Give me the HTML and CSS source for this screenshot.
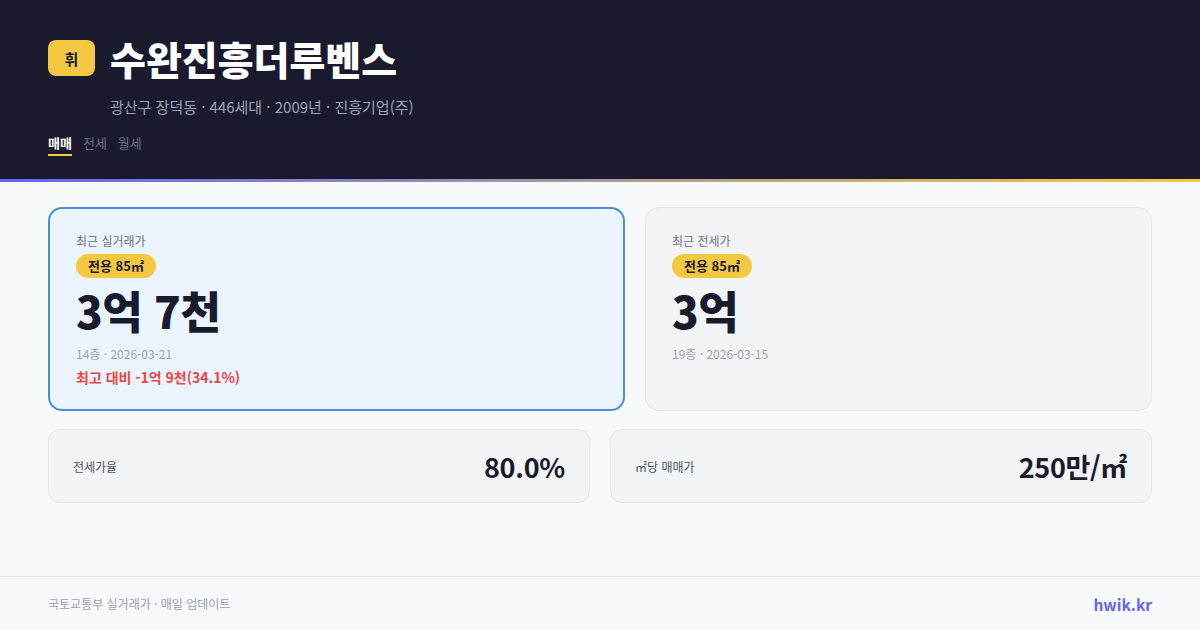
FILE: index.html
```html
<!DOCTYPE html>
<html lang="ko">
<head>
<meta charset="utf-8">
<link rel="stylesheet" href="styles.css">
</head>
<body>
<div class="page">
  <header class="header">
    <div class="title-row">
      <div class="logo">휘</div>
      <h1 class="title">수완진흥더루벤스</h1>
    </div>
    <div class="subtitle">광산구 장덕동 · 446세대 · 2009년 · 진흥기업(주)</div>
    <nav class="tabs">
      <span class="tab active">매매</span>
      <span class="tab">전세</span>
      <span class="tab">월세</span>
    </nav>
  </header>
  <div class="accent"></div>
  <main class="main">
    <div class="top-row">
      <section class="card card-primary">
        <div class="card-label">최근 실거래가</div>
        <div class="pill">전용 85㎡</div>
        <div class="price">3억 7천</div>
        <div class="meta">14층 · 2026-03-21</div>
        <div class="diff">최고 대비 -1억 9천(34.1%)</div>
      </section>
      <section class="card card-plain">
        <div class="card-label">최근 전세가</div>
        <div class="pill">전용 85㎡</div>
        <div class="price">3억</div>
        <div class="meta">19층 · 2026-03-15</div>
      </section>
    </div>
    <div class="stat-row">
      <div class="stat">
        <span class="stat-label">전세가율</span>
        <span class="stat-value">80.0%</span>
      </div>
      <div class="stat">
        <span class="stat-label">㎡당 매매가</span>
        <span class="stat-value">250만/㎡</span>
      </div>
    </div>
  </main>
  <footer class="footer">
    <span class="source">국토교통부 실거래가 · 매일 업데이트</span>
    <span class="brand">hwik.kr</span>
  </footer>
</div>
</body>
</html>
```

FILE: styles.css
```css
* { box-sizing: border-box; margin: 0; padding: 0; }
html, body { width: 1200px; height: 630px; overflow: hidden; }
body {
  font-family: "Noto Sans CJK KR", "Noto Sans", sans-serif;
  background: #f8f9fb;
  color: #1a1a2e;
}
.page { display: flex; flex-direction: column; height: 630px; }

.header {
  background: #1a1a2e;
  padding: 36px 48px 23px;
}
.title-row { display: flex; align-items: center; gap: 15px; height: 44px; }
.logo {
  width: 47px; height: 36px;
  background: #f5c842;
  border-radius: 8px;
  display: flex; align-items: center; justify-content: center;
  font-size: 15px; font-weight: 700; color: #1a1a2e;
}
.title {
  font-size: 39px; font-weight: 800; color: #ffffff;
  line-height: 44px; letter-spacing: 0;
}
.subtitle {
  margin: 17px 0 0 62px;
  font-size: 15px; line-height: 20px; color: #9ca3af;
}
.tabs { display: flex; gap: 11px; margin-top: 16px; }
.tab {
  font-size: 13px; line-height: 20px; color: #6b7280;
  padding-bottom: 1px; border-bottom: 2px solid transparent;
}
.tab.active { color: #ffffff; font-weight: 700; border-bottom-color: #f5c842; }

.accent { height: 3px; background: linear-gradient(90deg, #6366f1, #f5c842); }

.main { flex: 1; padding: 25px 48px 0; display: flex; flex-direction: column; gap: 18px; }
.top-row { display: grid; grid-template-columns: 577px 1fr; gap: 20px; }
.card {
  height: 204px;
  border-radius: 14px;
  padding: 23px 26px 0;
  display: flex; flex-direction: column; align-items: flex-start;
}
.card-primary { background: #ebf5ff; border: 2px solid #4a90d9; }
.card-plain { background: #f3f4f6; border: 1px solid #e5e7eb; padding: 24px 26px 0; }
.card-label { font-size: 12px; line-height: 18px; color: #6b7280; }
.pill {
  margin-top: 4px;
  height: 24px; line-height: 24px;
  padding: 0 12px;
  background: #f5c842; border-radius: 12px;
  font-size: 13px; font-weight: 700; color: #1a1a2e;
}
.price {
  margin-top: 2px;
  font-size: 44px; font-weight: 800; line-height: 60px;
  letter-spacing: -0.5px; color: #1a1a2e;
}
.meta { margin-top: 6px; font-size: 12px; line-height: 16px; color: #9ca3af; }
.diff { margin-top: 5px; font-size: 14px; font-weight: 700; line-height: 20px; color: #ef4444; }

.stat-row { display: grid; grid-template-columns: 1fr 1fr; gap: 20px; }
.stat {
  height: 74px;
  background: #f3f4f6; border: 1px solid #e5e7eb; border-radius: 12px;
  padding: 0 24px;
  display: flex; align-items: center; justify-content: space-between;
}
.stat-label { font-size: 12px; color: #4b5563; }
.stat-value { font-size: 27px; font-weight: 700; color: #1a1a2e; letter-spacing: -0.3px; }

.footer {
  height: 54px;
  border-top: 1px solid #e5e7eb;
  padding: 0 48px;
  display: flex; align-items: center; justify-content: space-between;
}
.source { font-size: 12px; color: #9ca3af; }
.brand { font-size: 15.5px; font-weight: 700; color: #6366f1; }
```
